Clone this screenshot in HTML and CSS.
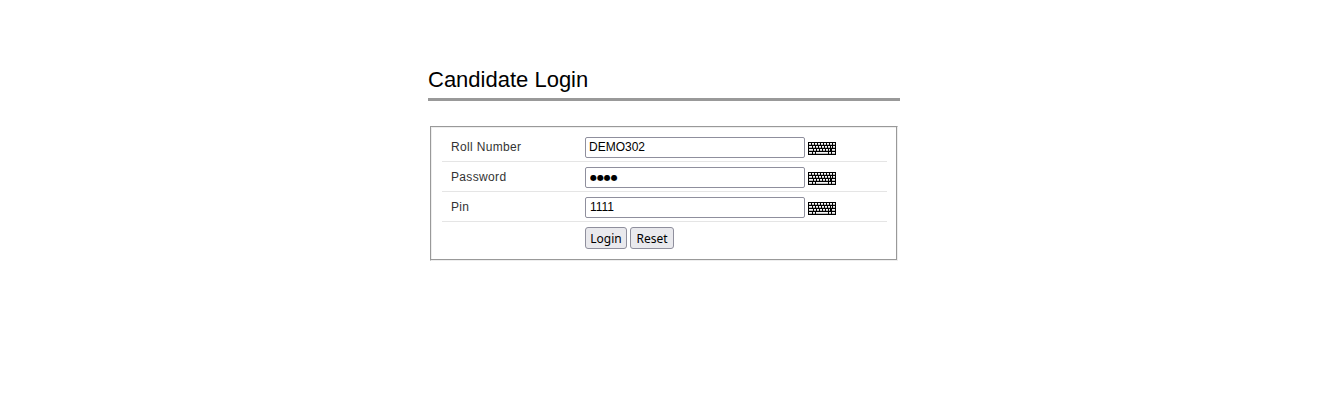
FILE: index.html
```html
<!DOCTYPE html>
<html lang="en">
<head>
<meta charset="utf-8">
<title>Candidate Login</title>
<link rel="stylesheet" href="styles.css">
</head>
<body>
<svg width="0" height="0" class="defs" aria-hidden="true">
  <defs>
    <symbol id="keyboard" viewBox="0 0 28 13">
      <rect width="28" height="13" fill="#000"/>
      <path stroke="#f4f4f4" stroke-width="2" stroke-dasharray="2 1" d="M1 2H27"/>
      <path stroke="#f4f4f4" stroke-width="2" stroke-dasharray="2 1" d="M5 5H24M6 8H22"/>
      <path stroke="#f4f4f4" stroke-width="2" d="M1 5H4M25 5H27M1 8H5M24 8H27M1 11H4M5 11H7M8 11H20M21 11H23M24 11H27"/>
      <path stroke="#000" d="M0 2.5H28M0 5.5H28M0 8.5H28M0 11.5H28" stroke-opacity=".22"/>
    </symbol>
  </defs>
</svg>
<main class="login">
  <h1 class="title">Candidate Login</h1>
  <form class="panel">
    <div class="row">
      <label class="label" for="roll">Roll Number</label>
      <input class="field" id="roll" type="text" value="DEMO302">
      <svg class="keyboard"><use href="#keyboard"/></svg>
    </div>
    <div class="row">
      <label class="label" for="password">Password</label>
      <input class="field password" id="password" type="text" value="●●●●">
      <svg class="keyboard"><use href="#keyboard"/></svg>
    </div>
    <div class="row">
      <label class="label" for="pin">Pin</label>
      <input class="field pin" id="pin" type="text" value="1111">
      <svg class="keyboard"><use href="#keyboard"/></svg>
    </div>
    <div class="actions">
      <button class="button" type="button">Login</button>
      <button class="button reset" type="button">Reset</button>
    </div>
  </form>
</main>
</body>
</html>
```
FILE: styles.css
```css
* { box-sizing: border-box; }
body {
  margin: 0;
  background: #fff;
  font-family: "Liberation Sans", Arial, sans-serif;
}
.defs { display: block; }
.login {
  width: 472px;
  margin-left: 428px;
  padding-top: 66px;
}
.title {
  height: 35px;
  margin: 0 0 25px;
  border-bottom: 3px solid #999;
  color: #000;
  font-size: 22px;
  font-weight: 400;
  line-height: 27px;
}
.panel {
  width: 468px;
  height: 135px;
  margin-left: 2px;
  padding: 5px 10px 0 11px;
  border: 1px solid #999;
  border-right-color: #eee;
  border-bottom-color: #eee;
  box-shadow: inset -1px -1px #999, inset 1px 1px #eee;
}
.row {
  display: flex;
  align-items: flex-start;
  height: 30px;
  padding: 5px 0 0 9px;
  border-bottom: 1px solid #e5e5e5;
}
.label {
  width: 134px;
  padding-top: 2px;
  color: #333;
  font-size: 12px;
  line-height: 16px;
  letter-spacing: .34px;
}
.field {
  width: 220px;
  height: 21px;
  padding: 0 3px 1px;
  border: 1px solid #8f8f9d;
  border-radius: 2px;
  background: #fff;
  color: #000;
  font-family: "Liberation Sans", Arial, sans-serif;
  font-size: 12px;
  outline: 0;
}
.password {
  padding: 0 3px 1px 4px;
  font-family: "DejaVu Sans", sans-serif;
  font-size: 8px;
  letter-spacing: -.1px;
}
.pin { padding-left: 4px; }
.keyboard {
  width: 28px;
  height: 13px;
  margin: 5px 0 0 3px;
  shape-rendering: crispEdges;
}
.actions {
  display: flex;
  gap: 3px;
  padding: 5px 0 0 143px;
}
.button {
  width: 42px;
  height: 22px;
  padding: 1px 0 0;
  border: 1px solid #8f8f9d;
  border-radius: 3px;
  background: #e9e9ed;
  color: #000;
  font-family: "Noto Sans", sans-serif;
  font-size: 12px;
  line-height: 19px;
}
.reset { width: 44px; }
```
